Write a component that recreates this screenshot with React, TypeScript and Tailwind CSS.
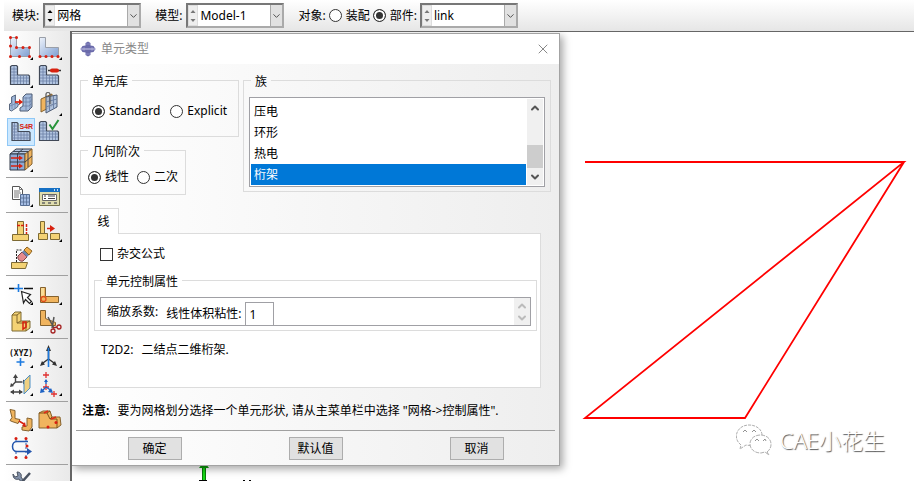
import { useState } from 'react'
import type { ReactNode } from 'react'
import { ChevronDown, ChevronUp, X } from 'lucide-react'

interface ToolProps {
  label: string
  active?: boolean
  menu?: boolean
  children: ReactNode
}

function Tool({ label, active, menu, children }: ToolProps) {
  return (
    <button
      type="button"
      aria-label={label}
      className={active ? 'size-7 bg-[#cce8ff] outline -outline-offset-1 outline-[#90c8f6]' : 'size-7'}
    >
      <svg viewBox="0 0 28 28" className="block size-7" fill="none">
        {children}
        {menu && <path d="M26 23v3h-3z" fill="#000" />}
      </svg>
    </button>
  )
}

function ToolGroup({ children }: { children: ReactNode }) {
  return <div className="grid grid-cols-[28px_28px] gap-x-px py-[3px] pl-px">{children}</div>
}

// L-shaped part covered with a mesh
function MeshL() {
  return (
    <g>
      <path d="M5 3.500h4.500l1 1v8.500h11l1 1v8.500h-19v-18z" fill="#b1c4e0" stroke="#414957" strokeWidth="1.200" />
      <path d="M7 4v18M10.500 13v9M13.500 13v9M16.500 13v9M19.500 13v9M4 7h6M4 10h6M4 13h6M4 16h18M4 19h18" stroke="#6d82a6" strokeWidth=".8" />
    </g>
  )
}

function PlainL() {
  return (
    <>
      <defs>
        <linearGradient id="part" x1="0" y1="0" x2="1" y2="1">
          <stop offset="0" stopColor="#eef3fb" />
          <stop offset="1" stopColor="#7f9fd2" />
        </linearGradient>
      </defs>
      <path d="M3.500 3.500h6v10h13v9h-19z" fill="url(#part)" stroke="#9a9fa8" />
    </>
  )
}

function Dots({ points }: { points: number[][] }) {
  return (
    <>
      {points.map(([x, y]) => (
        <circle key={`${x}-${y}`} cx={x} cy={y} r="1.500" fill="#d81e10" />
      ))}
    </>
  )
}

const gold = { fill: '#f3d274', stroke: '#7d6a34' }
const orange = { fill: '#f0b45e', stroke: '#85622e' }

function Toolbox() {
  return (
    <aside className="ml-1 w-[66px] shrink-0 divide-y divide-[#a0a0a0] overflow-hidden bg-linear-to-r from-white to-[#e9e9e9] px-0.5">
      <ToolGroup>
        <Tool label="为部件实例布种" menu>
          <PlainL />
          <Dots points={[[3.5, 3.5], [9.5, 3.5], [3.5, 12], [9.5, 13.5], [16, 13.5], [22.5, 13.5], [3.5, 22.5], [12.5, 22.5], [22.5, 22.5]]} />
        </Tool>
        <Tool label="为边布种" menu>
          <PlainL />
          <Dots points={[[4, 22.5], [10, 22.5], [16, 22.5], [22, 22.5]]} />
        </Tool>
        <Tool label="为部件划分网格" menu>
          <MeshL />
        </Tool>
        <Tool label="指派网格控制属性">
          <MeshL />
          <path d="M12 8.500h13" stroke="#333" strokeWidth="1.500" />
          <rect x="14" y="6.500" width="9" height="4" rx="2" fill="#d8210f" />
        </Tool>
        <Tool label="由下而上网格">
          <path d="M2.500 14l2-1V7l4-2v8l3 1-1 3-6 4-2-1z" fill="#a4bbdc" stroke="#59677e" />
          <path d="M5 7v12M8 6v12M3 16l7-3" stroke="#6d82a6" strokeWidth=".7" />
          <path d="M13 18l3-2V7l3-3h6v13l-4 4h-8z" fill="#a4bbdc" stroke="#4d5b73" />
          <path d="M16 8h7l2-3M16 12h7l2-3M15 16h7l3-3M19 7v13M23 7v12" stroke="#6d82a6" strokeWidth=".8" />
          <path d="M8 12h5" stroke="#d8210f" strokeWidth="1.700" />
          <path d="M12 9l4 3-4 3z" fill="#d8210f" />
        </Tool>
        <Tool label="关联网格与几何" menu>
          <path d="M5 9l11-5v12L5 22z" {...orange} />
          <path d="M10 7l11-2v12l-11 6z" fill="#a4bbdc" fillOpacity=".85" stroke="#4d5b73" />
          <path d="M13.500 6v15M17.500 6v13M10 12l11-3M10 17l11-4" stroke="#6d82a6" />
          <path d="M10 7V4c0-2 4-2 4 0v10" stroke="#555" strokeWidth="1.200" />
        </Tool>
        <Tool label="指派单元类型" active>
          <path d="M5 4.500h5l1 1v8h11l1 1v8H5z" fill="#b1c4e0" stroke="#414957" strokeWidth="1.200" />
          <path d="M7.500 5v17M11 14v8M14 14v8M17 14v8M20 14v8M5 8h5M5 11h5M5 14h5M5 17h18M5 20h18" stroke="#6d82a6" strokeWidth=".8" />
          <text x="12.500" y="11" fontSize="7" fontWeight="700" fill="#d8210f" className="font-['Liberation_Sans',sans-serif]">S4R</text>
        </Tool>
        <Tool label="检查网格">
          <MeshL />
          <path d="M13.500 6.500l3 4.500 6-9" stroke="#27943a" strokeWidth="2" />
        </Tool>
        <Tool label="指派叠放方向" menu>
          <path d="M3 8l6-5h16l-6 5z" fill="#b6c7e0" stroke="#333b49" />
          <path d="M3 8h15v16H3z" fill="#8daad6" stroke="#333b49" />
          <path d="M18 8l7-5v15l-7 6z" {...orange} />
          <path d="M10.500 8V24M3 16h15l7-6M10 8l6-5M6 5.500h15V21" stroke="#333b49" strokeWidth=".9" />
          <path d="M4 12h8M4 20h8" stroke="#d8210f" strokeWidth="1.400" />
          <path d="M12 9.500l4 2.500-4 2.500zM12 17.500l4 2.500-4 2.500z" fill="#d8210f" />
        </Tool>
      </ToolGroup>
      <ToolGroup>
        <Tool label="创建网格部件" menu>
          <path d="M5.500 5.500h7l3 3v10h-10z" fill="#fff" stroke="#555" />
          <path d="M12.500 5.500v3h3M7 10h6M7 12h7M7 14h5M7 16h5" stroke="#777" />
          <path d="M13.500 13.500h9v11h-9z" fill="#a3bbe2" stroke="#566d93" />
          <path d="M16.500 13v12M19.500 13v12M13 17h10M13 21h10" stroke="#566d93" strokeWidth=".8" />
        </Tool>
        <Tool label="网格管理器">
          <path d="M3.500 7.500h20v17h-20z" fill="#dfdcae" stroke="#77744a" />
          <path d="M3 7h21v4H3z" fill="#1670c4" />
          <path d="M18 9h1M21 9h1" stroke="#fff" strokeWidth="1.500" />
          <path d="M6.500 13.500h14v6h-14z" fill="#fff" stroke="#666" />
          <path d="M8 15h2M12 15h7M8 17.500h2M12 17.500h7" stroke="#444" />
          <path d="M6 22h3M12 22h3M18 22h3" stroke="#666" strokeWidth="1.500" />
        </Tool>
      </ToolGroup>
      <ToolGroup>
        <Tool label="偏移网格" menu>
          <path d="M10.500 5.500h6v13h-6z" {...gold} />
          <path d="M5.500 18.500h16v6h-16z" {...gold} />
          <path d="M10 9.500h7" stroke="#d8210f" strokeDasharray="3 1" strokeWidth="1.500" />
          <path d="M19.500 8v10" stroke="#d8210f" strokeDasharray="3 1" strokeWidth="1.500" />
        </Tool>
        <Tool label="编辑网格" menu>
          <path d="M4.500 5.500h4v12h-4zM2.500 17.500h9v6h-9zM14.500 17.500h9v6h-9z" {...gold} />
          <path d="M11 12.500h4" stroke="#d8210f" strokeWidth="1.500" />
          <path d="M14 9l5 3.500-5 3.500z" fill="#d8210f" />
        </Tool>
        <Tool label="删除网格">
          <path d="M9.500 18V6h6" stroke="#222" strokeDasharray="2 1" />
          <path d="M4.500 18.500h16l-2 6h-14z" {...gold} />
          <path d="M11 12l4-4 5 5-4 4c-3 1-6-2-5-5z" fill="#e58a8d" stroke="#7c4347" />
          <path d="M15 8l2-2 5 5-2 2z" fill="#6f84ad" />
          <path d="M17 6l3-3 5 4-3 4z" fill="#f0b04e" stroke="#8c6422" />
        </Tool>
      </ToolGroup>
      <ToolGroup>
        <Tool label="分割边" menu>
          <path d="M2 9.500h5M17 9.500h9" stroke="#111" strokeWidth="1.300" />
          <path d="M11.500 5v8M7 9.500h9" stroke="#1d7be0" strokeWidth="1.600" />
          <path d="M14.500 12.500l9 3-3 3 4 4-2 2-4-4-2 3.500z" fill="#fff" stroke="#222" strokeWidth="1.200" />
        </Tool>
        <Tool label="创建虚拟拓扑" menu>
          <path d="M4.500 8.500h5v9h13v6h-18z" {...orange} />
          <path d="M5 9h3v9H5z" fill="#f9dc96" />
          <circle cx="7.500" cy="20" r="2.500" stroke="#e0501a" strokeWidth="1.300" />
        </Tool>
        <Tool label="分割几何元素" menu>
          <path d="M5 8l3-3h6v9h9v7l-4 3H5z" {...gold} />
          <path d="M5 8h5v8h9v8M10 8l4-3M10 16l4-2M19 16l4-2" stroke="#80662b" />
          <path d="M16 15v7l3-2v-5z" stroke="#d8210f" strokeWidth="1.500" />
        </Tool>
        <Tool label="修复小边">
          <path d="M4.500 3.500h5v8l10 4v3h-15z" {...orange} />
          <path d="M12 10l6 11M18 10l-2 11" stroke="#555" strokeWidth="1.500" />
          <circle cx="17" cy="24" r="2" stroke="#a52222" strokeWidth="1.300" />
          <circle cx="23" cy="20" r="2" stroke="#a52222" strokeWidth="1.300" />
          <path d="M17 21l4-1" stroke="#a52222" strokeWidth="1.300" />
        </Tool>
      </ToolGroup>
      <ToolGroup>
        <Tool label="创建基准点" menu>
          <text x="2" y="14" fontSize="8" fontWeight="700" fill="#111" className="font-['DejaVu_Sans_Mono',monospace]">(XYZ)</text>
          <path d="M13.500 16v8M9.500 20h8" stroke="#1d7be0" strokeWidth="1.600" />
        </Tool>
        <Tool label="创建基准坐标系" menu>
          <path d="M12.500 17V6M12.500 17l-7 5M12.500 17l7 5" stroke="#333" strokeWidth="1.500" />
          <path d="M12.500 3l2.500 6h-5zM4 24l2-5 3 3.500zM21 24l-2-5-3 3.500z" fill="#333" />
          <path d="M12.500 6v19" stroke="#1d7be0" strokeWidth="1.600" />
        </Tool>
        <Tool label="创建基准平面" menu>
          <path d="M8.500 12V6M8.500 12l-4 4M8.500 12h7M4 22h11" stroke="#444" strokeWidth="1.400" />
          <path d="M8.500 4l2.500 4H6zM3 17l1-4 3 3zM16 9.500v5l3-2.500zM3 22l4-2.500v5zM16 22l-4-2.500v5z" fill="#444" />
          <path d="M17 11l6-6v13l-6 6z" fill="#efd080" stroke="#4f8fc4" />
        </Tool>
        <Tool label="创建参考点" menu>
          <path d="M10 2v6M7 5h6M10 14v6M7 17h6M18 21v6M15 24h6" stroke="#e03131" strokeWidth="1.300" />
          <path d="M10 10v4M10 17l-4 4M10 17l6 4" stroke="#1d62c4" strokeWidth="1.400" />
          <path d="M10 9l2 3H8zM4 23l1-5 4 4zM17 23l-2-5-3 4z" fill="#1d62c4" />
        </Tool>
      </ToolGroup>
      <ToolGroup>
        <Tool label="复制网格模式" menu>
          <path d="M3 4.500l5 1v8l5 1-2 4-6-2-2-1 2-3z" {...orange} />
          <path d="M20 13l5 1v8l-3 4-7-1v-3l5-1z" {...orange} />
          <path d="M12 16l5 3" stroke="#d8210f" strokeWidth="1.500" />
          <path d="M19 22l-4-1 3-4z" fill="#d8210f" />
        </Tool>
        <Tool label="移除面">
          <path d="M3 8l4-2h7l2 6h8l1 8-4 3H3z" {...orange} />
          <path d="M3 8h8l3 6h7v9M11 8l3-2M14 14l2-2" stroke="#7d5216" />
          <path d="M8 8l4-2M15 14l5-2" stroke="#e02b18" strokeWidth="1.500" />
          <Dots points={[[20, 17.5], [12, 22]]} />
        </Tool>
        <Tool label="投影到曲线">
          <path d="M21 8.500H10c-6 0-6 10 0 10h11" stroke="#2456ad" strokeWidth="1.500" />
          <path d="M20 15l5 3.500-5 3.500z" fill="#2456ad" />
          <path d="M9 6v3M19 6v18M9 19v5" stroke="#2456ad" strokeDasharray="2 2" />
          <Dots points={[[9, 5.5], [19, 5.5], [20, 13], [9, 24.5], [19, 24.5]]} />
        </Tool>
      </ToolGroup>
      <ToolGroup>
        <Tool label="工具选项">
          <path d="M6 6c0 5 3 6 6 5l8 12 3-2-9-12c1-3-1-5-4-5l1 4-3 1z" fill="#8492aa" stroke="#4a5361" />
          <path d="M23 5l-9 10-8 9" stroke="#4a5361" strokeWidth="2.500" />
        </Tool>
      </ToolGroup>
    </aside>
  )
}

interface ComboProps {
  label: string
  value: string
  enabled?: boolean
  labelled?: boolean
}

function Combo({ label, value, enabled, labelled }: ComboProps) {
  const arrow = enabled ? 'block h-2.5 w-2 text-black' : 'block h-2.5 w-2 text-[#777]'
  return (
    <div className="flex items-center gap-1">
      {!labelled && <label htmlFor={label}>{label}:</label>}
      <div className="flex h-[25px] w-[98px] border-2 border-t-[#777] border-r-[#aaa] border-b-[#aaa] border-l-[#777] bg-white">
        <div className="flex w-2.5 flex-col border border-[#ddd] bg-[#eee]">
          <button type="button" aria-label={`${label} 上一个`} className={arrow}>
            <svg viewBox="0 0 8 10" className="block"><path d="M4 4l2.500 3h-5z" fill="currentColor" /></svg>
          </button>
          <button type="button" aria-label={`${label} 下一个`} className={arrow}>
            <svg viewBox="0 0 8 10" className="block"><path d="M4 6l2.500-3h-5z" fill="currentColor" /></svg>
          </button>
        </div>
        <select
          id={label}
          aria-label={label}
          className="min-w-0 flex-1 appearance-none bg-white pl-0.5 leading-5 outline-none"
        >
          <option>{value}</option>
        </select>
        <span className="pointer-events-none flex w-3 items-center justify-center border-l border-[#aaa] bg-[#e1e1e1]">
          <ChevronDown className="size-3 text-[#444]" strokeWidth={2} />
        </span>
      </div>
    </div>
  )
}

interface RadioProps {
  name: string
  label: string
  checked: boolean
  onSelect: () => void
}

function Radio({ name, label, checked, onSelect }: RadioProps) {
  return (
    <label className="flex items-center gap-1">
      <input
        type="radio"
        name={name}
        checked={checked}
        onChange={onSelect}
        className="size-[13px] appearance-none rounded-full border border-[#333] bg-white checked:bg-[#333] checked:shadow-[inset_0_0_0_2px_white]"
      />
      {label}
    </label>
  )
}

function TopBar() {
  const [target, setTarget] = useState('部件:')
  return (
    <header className="ml-1 flex h-[31px] shrink-0 items-center bg-linear-to-b from-white to-[#e6e6e6] pl-2 whitespace-nowrap">
      <Combo label="模块" value="网格" enabled />
      <div className="ml-3.5">
        <Combo label="模型" value="Model-1" />
      </div>
      <div className="ml-3.5 flex items-center gap-[3px]">
        <span>对象:</span>
        <Radio name="target" label="装配" checked={target === '装配'} onSelect={() => setTarget('装配')} />
        <Radio name="target" label="部件:" checked={target === '部件:'} onSelect={() => setTarget('部件:')} />
        <Combo label="部件" value="link" labelled />
      </div>
    </header>
  )
}

interface GroupProps {
  title: string
  className?: string
  children: ReactNode
}

function Group({ title, className, children }: GroupProps) {
  return (
    <fieldset className={`border border-[#dcdcdc] ${className ?? ''}`}>
      <legend className="ml-[7px] px-1 pt-1 leading-4">{title}</legend>
      {children}
    </fieldset>
  )
}

const families = ['压电', '环形', '热电', '桁架']

function FamilyList() {
  const [selected, setSelected] = useState('桁架')
  return (
    <div className="mx-[5px] mt-[7px] flex h-[90px] border border-[#a0a0a5] bg-white p-px">
      <ul role="listbox" aria-label="族" className="flex-1 pt-0.5">
        {families.map((family) => (
          <li
            key={family}
            role="option"
            aria-selected={family === selected}
            onClick={() => setSelected(family)}
            className="h-[21px] pl-[3px] leading-[21px] aria-selected:bg-[#0078d7] aria-selected:text-white"
          >
            {family}
          </li>
        ))}
      </ul>
      <div className="ml-px flex w-4 flex-col items-center bg-[#f0f0f0]">
        <button type="button" aria-label="向上滚动" className="flex h-[18px] items-center">
          <ChevronUp className="size-3 text-[#555]" strokeWidth={4} />
        </button>
        <div className="mt-7 h-6 w-full bg-[#cdcdcd]" />
        <button type="button" aria-label="向下滚动" className="flex h-[17px] items-center">
          <ChevronDown className="size-3 text-[#555]" strokeWidth={4} />
        </button>
      </div>
    </div>
  )
}

function ElementTypeDialog() {
  const [library, setLibrary] = useState('Standard')
  const [order, setOrder] = useState('线性')

  return (
    <section
      role="dialog"
      aria-labelledby="dialog-title"
      className="absolute top-px -left-px w-[489px] border border-[#a3a3a3] bg-linear-to-r from-white to-[#eee] shadow-[3px_3px_8px_rgba(0,0,0,0.35)]"
    >
      <div className="flex h-[30px] items-center bg-white pr-2 pl-2">
        <svg viewBox="0 0 16 16" className="size-4">
          <path d="M5.500 2L8 .500 10.500 2v2.500l3 .500L15.500 8l-2 3-3 .500V14L8 15.500 5.500 14v-2.500l-3-.500L.500 8l2-3 3-.500z" fill="#6a6aaa" />
          <path d="M6 3h4M6 13h4M4 6v4M12 6v4" stroke="#8d8dc4" />
          <path d="M0 8h16" stroke="#c9c9e6" />
        </svg>
        <h1 id="dialog-title" className="ml-[5px] flex-1 text-[#888]">单元类型</h1>
        <button type="button" aria-label="关闭">
          <X className="size-4 text-[#888]" strokeWidth={1.5} />
        </button>
      </div>

      <div className="px-2 pt-1.5">
        <div className="flex items-start gap-1">
          <div className="w-[159px]">
            <Group title="单元库">
              <div className="flex h-[46px] gap-2.5 px-[11px] pt-3 pb-4">
                <Radio name="library" label="Standard" checked={library === 'Standard'} onSelect={() => setLibrary('Standard')} />
                <Radio name="library" label="Explicit" checked={library === 'Explicit'} onSelect={() => setLibrary('Explicit')} />
              </div>
            </Group>
            <Group title="几何阶次" className="mt-[3px] w-[106px]">
              <div className="flex gap-2 px-[7px] py-2">
                <Radio name="order" label="线性" checked={order === '线性'} onSelect={() => setOrder('线性')} />
                <Radio name="order" label="二次" checked={order === '二次'} onSelect={() => setOrder('二次')} />
              </div>
            </Group>
          </div>
          <Group title="族" className="flex-1 pb-1">
            <FamilyList />
          </Group>
        </div>

        <div className="mt-[13px] mr-2.5 ml-2">
          <button
            type="button"
            role="tab"
            aria-selected
            className="relative -mb-px block h-[26px] w-[31px] border border-b-0 border-[#dcdcdc] bg-white"
          >
            线
          </button>
          <div role="tabpanel" className="border border-[#dcdcdc] bg-white pt-[11px] pr-[3px] pb-7 pl-[5px]">
            <label className="ml-1.5 flex items-center gap-1">
              <input type="checkbox" className="size-[13px] appearance-none border border-[#333] bg-white checked:bg-[#333]" />
              杂交公式
            </label>
            <Group title="单元控制属性" className="mt-[7px] pb-1">
              <div className="mx-[5px] mt-[7px] flex h-[29px] border border-[#a0a0a5]">
                <div className="flex flex-1 items-end pl-1.5">
                  <span className="mr-2 self-center">缩放系数:</span>
                  <label htmlFor="viscosity" className="mr-1 pb-0.5">线性体积粘性:</label>
                  <input
                    id="viscosity"
                    defaultValue="1"
                    className="h-[23px] w-[29px] border border-b-0 border-[#a0a0a5] bg-white pl-[3px] outline-none"
                  />
                </div>
                <div className="flex w-4 flex-col items-center justify-center bg-[#f0f0f0]">
                  <ChevronUp className="size-3 text-[#bbb]" strokeWidth={4} />
                  <ChevronDown className="size-3 text-[#bbb]" strokeWidth={4} />
                </div>
              </div>
            </Group>
            <p className="mt-2.5 ml-[7px]">
              T2D2:<span className="ml-2">二结点二维桁架.</span>
            </p>
          </div>
        </div>

        <p className="mt-3.5 ml-0.5 whitespace-nowrap">
          <b className="mr-2">注意:</b>要为网格划分选择一个单元形状, 请从主菜单栏中选择 "网格-&gt;控制属性".
        </p>
      </div>

      <div className="mx-1 mt-2.5 border-t border-[#a0a0a0]" />
      <div className="grid grid-cols-3 justify-items-center px-0.5 pt-1.5 pb-[5px]">
        {['确定', '默认值', '取消'].map((text) => (
          <button key={text} type="button" className="h-[23px] w-[54px] border border-[#adadad] bg-[#e1e1e1]">
            {text}
          </button>
        ))}
      </div>
    </section>
  )
}

function Viewport() {
  return (
    <main className="relative flex-1 overflow-hidden border-t border-l-2 border-[#666] bg-white">
      <svg className="absolute inset-0 size-full" fill="none">
        {/* truss */}
        <path d="M513 130h319L513 386h160L832 130" stroke="#f00" strokeWidth="1.800" />
        {/* triad axis */}
        <path d="M132 433v18" stroke="#087a08" strokeWidth="4" />
        <path d="M132 433v18" stroke="#16d916" strokeWidth="2" />
        <path d="M127 436l3-4h4l3 4z" fill="#0b9b0b" />
        <path d="M127 448.500h8M171 448.500h2M177 448.500h2" stroke="#000" />
      </svg>
      <ElementTypeDialog />
      <div className="absolute right-[29px] bottom-[25px] flex items-center gap-2">
        <svg viewBox="0 0 36 32" className="h-8 w-9" fill="#fff" stroke="#999" strokeWidth=".8">
          <path d="M5 21C-4 14 1 1 13 1c8 0 13 5 13 10 0 7-7 12-16 10l-6 4z" strokeDasharray="3 1" />
          <path d="M31 28c7-5 5-17-7-17-14 1-13 18 1 18l4-1 4 3z" strokeDasharray="4 1" />
          <path d="M7 8l2-2 2 2M16 8l2-2 2 2M19 17l2-2 2 2M27 17l2-2 1 2" stroke="#777" />
        </svg>
        <span className="text-[22px] leading-8 font-light text-white [text-shadow:1px_1px_1px_#555]">CAE小花生</span>
      </div>
    </main>
  )
}

export default function App() {
  return (
    <div className="flex h-screen flex-col overflow-hidden bg-white font-['Noto_Sans','Noto_Sans_CJK_SC',sans-serif] text-xs leading-[18px] text-black">
      <TopBar />
      <div className="flex min-h-0 flex-1">
        <Toolbox />
        <Viewport />
      </div>
    </div>
  )
}
